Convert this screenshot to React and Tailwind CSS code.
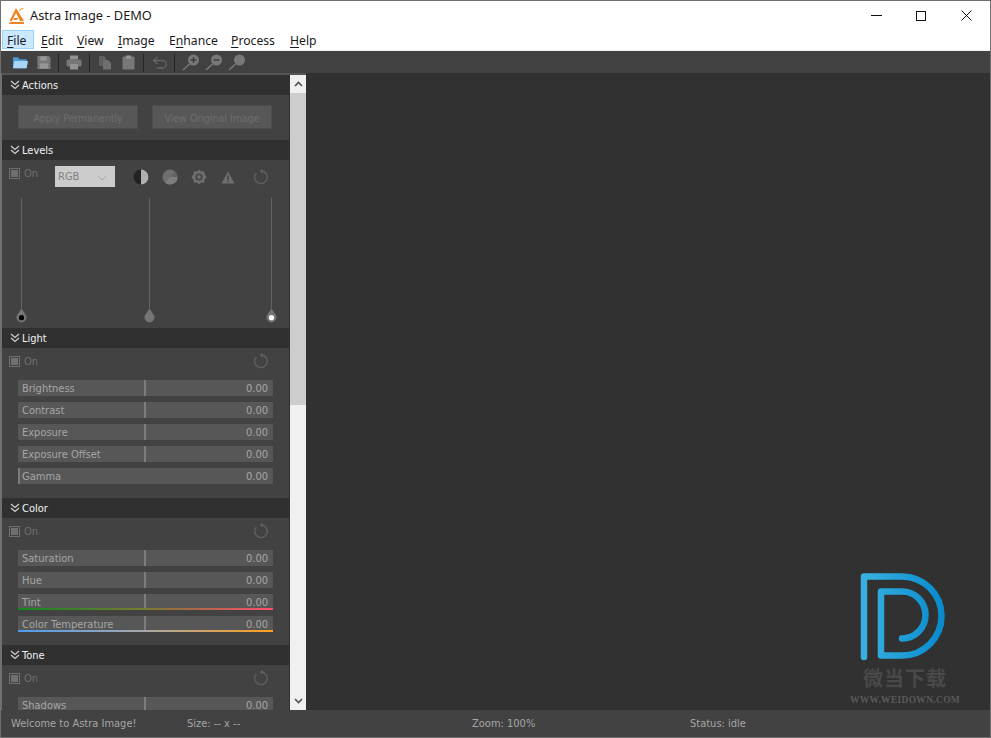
import React from 'react';

const UI_FONT = "font-['Noto_Sans','Open_Sans',sans-serif]";
const PANEL_FONT = "font-['DejaVu_Sans_Condensed','Roboto',sans-serif]";

const MENU = [
  { pre: '', key: 'F', post: 'ile', w: 'w-[32px] mr-[1px]', active: true },
  { pre: '', key: 'E', post: 'dit', w: 'w-[36px]' },
  { pre: '', key: 'V', post: 'iew', w: 'w-[41px]' },
  { pre: '', key: 'I', post: 'mage', w: 'w-[51px]' },
  { pre: 'E', key: 'n', post: 'hance', w: 'w-[62px]' },
  { pre: '', key: 'P', post: 'rocess', w: 'w-[59px]' },
  { pre: '', key: 'H', post: 'elp', w: 'w-[40px]' },
];

function AppLogo() {
  return (
    <svg width="16" height="18" viewBox="0 0 16 18" className="shrink-0">
      <path d="M7 1 L0.5 14 L3 14 L7 6 L11 14 L15 14 Z" fill="#f58220" />
      <path d="M5 11 L9 11 L8 13 L4.5 13 Z" fill="#f58220" />
      <path d="M10 3 C11 1.5 13 1 15 1.5 L13.5 2.5 C12.5 2.5 11.5 3 11 4 Z" fill="#f9a24b" />
      <rect x="0.5" y="15" width="14.5" height="2" fill="#f58220" />
    </svg>
  );
}

function TitleBar() {
  return (
    <div className="h-[29px] shrink-0 bg-white flex items-center pl-[8px]">
      <AppLogo />
      <span className={`ml-[5px] text-[12.8px] text-[#1a1a1a] ${UI_FONT}`}>Astra Image - DEMO</span>
      <div className="ml-auto flex items-center pr-[18px]">
        <svg width="11" height="11" viewBox="0 0 11 11"><path d="M0 5.500H11" stroke="#111" /></svg>
        <svg width="10" height="10" viewBox="0 0 10 10" className="ml-[34px]"><rect x="0.500" y="0.500" width="9" height="9" fill="none" stroke="#111" /></svg>
        <svg width="11" height="11" viewBox="0 0 11 11" className="ml-[35px]"><path d="M0.500 0.500L10.500 10.500M10.500 0.500L0.500 10.500" stroke="#111" /></svg>
      </div>
    </div>
  );
}

function MenuBar() {
  return (
    <div className="h-[21px] shrink-0 bg-white border-b border-[#f0f0f0] flex pl-[1px] pb-[1px]">
      {MENU.map((m) => (
        <div
          key={m.key}
          className={`${m.w} h-[19px] flex items-center pt-[3px] text-[12.2px] leading-[16px] text-[#1a1a1a] ${UI_FONT} ${m.active ? 'bg-[#cce8ff] border border-[#99d1ff] pl-[4px]' : 'pl-[6px]'}`}
        >
          <span>{m.pre}<span className="underline underline-offset-2">{m.key}</span>{m.post}</span>
        </div>
      ))}
    </div>
  );
}

function ToolSep({ ml }) {
  return <div className={`w-px h-[18px] bg-[#242424] ${ml}`} />;
}

function Toolbar() {
  const g = '#787878';
  return (
    <div className="h-[22px] shrink-0 bg-[#414141] flex items-center pl-[11px] pt-[1px]">
      <svg width="17" height="15" viewBox="0 0 18 16">
        <path d="M1 2.500 H6.500 L8 4.500 H15.500 V14 H1 Z" fill="#4f97d6" />
        <path d="M2.500 6.500 H17 L15.500 14 H1 Z" fill="#a9d6f7" />
      </svg>
      <svg width="16" height="15" viewBox="0 0 16 16" className="ml-[7px]">
        <path d="M1 1 H13 L15 3 V15 H1 Z" fill={g} />
        <rect x="4" y="1.500" width="7" height="4.500" fill="#969696" />
        <rect x="3.500" y="9" width="9" height="5.500" fill="#969696" />
      </svg>
      <ToolSep ml="ml-[6px]" />
      <svg width="16" height="15" viewBox="0 0 16 15" className="ml-[7px]">
        <rect x="4" y="0.500" width="8" height="4" fill="#939393" />
        <rect x="0.500" y="4.500" width="15" height="7" rx="1.500" fill={g} />
        <rect x="4" y="9" width="8" height="5.500" fill="#939393" />
      </svg>
      <ToolSep ml="ml-[7px]" />
      <svg width="14" height="15" viewBox="0 0 14 15" className="ml-[8px]">
        <path d="M1 1 H6 L8 3 V11 H1 Z" fill="#5f5f5f" />
        <path d="M5 5 H10 L13 8 V14.500 H5 Z" fill="#6f6f6f" />
      </svg>
      <svg width="13" height="15" viewBox="0 0 13 15" className="ml-[10px]">
        <rect x="0.500" y="1.500" width="12" height="13" rx="1" fill={g} />
        <rect x="4" y="0.500" width="5" height="3" fill="#969696" />
      </svg>
      <ToolSep ml="ml-[8px]" />
      <svg width="16" height="13" viewBox="0 0 16 13" className="ml-[8px]">
        <path d="M2 4.500 H10.500 A3.700 3.700 0 0 1 10.500 12 H5" fill="none" stroke="#666666" strokeWidth="1.300" />
        <path d="M5.500 1 L1.500 4.500 L5.500 8" fill="none" stroke="#666666" strokeWidth="1.300" />
      </svg>
      <ToolSep ml="ml-[6px]" />
      <svg width="18" height="17" viewBox="0 0 18 17" className="ml-[7px]">
        <circle cx="11.500" cy="6" r="5.500" fill={g} />
        <path d="M7.500 10 L1 16" stroke={g} strokeWidth="1.600" />
        <path d="M8.500 6H14.500M11.500 3V9" stroke="#3f3f3f" strokeWidth="1.500" />
      </svg>
      <svg width="18" height="17" viewBox="0 0 18 17" className="ml-[5px]">
        <circle cx="11.500" cy="6" r="5.500" fill={g} />
        <path d="M7.500 10 L1 16" stroke={g} strokeWidth="1.600" />
        <path d="M8.500 6H14.500" stroke="#3f3f3f" strokeWidth="1.500" />
      </svg>
      <svg width="18" height="17" viewBox="0 0 18 17" className="ml-[5px]">
        <circle cx="11.500" cy="6" r="5.500" fill={g} />
        <path d="M7.500 10 L1 16" stroke={g} strokeWidth="1.600" />
      </svg>
    </div>
  );
}

function SectionHeader({ title }) {
  return (
    <div className="h-[20px] bg-[#303030] flex items-center pl-[8px]">
      <svg width="10" height="10" viewBox="0 0 10 10">
        <path d="M1 1 L5 4.500 L9 1 M1 5 L5 8.500 L9 5" fill="none" stroke="#d0d0d0" strokeWidth="1.200" />
      </svg>
      <span className={`ml-[2px] pt-[2px] text-[11px] text-[#f0f0f0] ${PANEL_FONT}`}>{title}</span>
    </div>
  );
}

function Reset() {
  return (
    <svg width="16" height="16" viewBox="0 0 16 16">
      <path d="M8.500 2 A6.300 6.300 0 1 1 3.300 4" fill="none" stroke="#5f5f5f" strokeWidth="1.400" />
      <path d="M10 0 L10 4.500 L6.500 2 Z" fill="#5f5f5f" />
    </svg>
  );
}

function OnBox() {
  return (
    <div className="w-[30px] flex items-center">
      <div className="w-[11px] h-[11px] border border-[#6f6f6f] flex items-center justify-center">
        <div className="w-[7px] h-[7px] bg-[#6f6f6f]" />
      </div>
      <span className={`ml-[4px] pt-[1px] text-[11px] leading-[12px] text-[#6f6f6f] ${PANEL_FONT}`}>On</span>
    </div>
  );
}

function OnRow() {
  return (
    <div className="h-[26px] mb-[6px] flex items-center justify-between pl-[7px] pr-[20px]">
      <OnBox />
      <Reset />
    </div>
  );
}

function Slider({ label, tint, pos = 'middle' }) {
  return (
    <div className={`relative h-[16px] w-[255px] bg-[#575757] flex items-center justify-between pl-[4px] pr-[5px] pt-[2px] text-[11px] text-[#a6a6a6] ${PANEL_FONT}`}>
      <span>{label}</span>
      <span>0.00</span>
      <div className={`absolute top-0 bottom-0 w-[2px] bg-[#7c7c7c] ${pos === 'left' ? 'left-0' : 'left-[126px]'}`} />
      {tint === 'tint' && <div className="absolute left-0 right-0 bottom-0 h-[2px] bg-[linear-gradient(90deg,#0f8a1e,#7a7a30_50%,#ff4d6d)]" />}
      {tint === 'temp' && <div className="absolute left-0 right-0 bottom-0 h-[2px] bg-[linear-gradient(90deg,#4b9df0,#a8a8a8_50%,#ff9f1c)]" />}
    </div>
  );
}

function Sliders({ items }) {
  return (
    <div className="flex flex-col gap-[6px] pl-[16px]">
      {items.map((s) => <Slider key={s.label} {...s} />)}
    </div>
  );
}

function Handle({ dot }) {
  return (
    <div className="flex flex-col items-center w-[12px]">
      <div className="w-px h-[110px] bg-[#636363]" />
      <svg width="11" height="15" viewBox="0 0 11 15">
        <path d="M5.500 0.500 L9.500 6.500 A4.900 4.900 0 1 1 1.500 6.500 Z" fill="#757575" />
        {dot && <circle cx="5.500" cy="9.700" r="2.600" fill={dot} />}
      </svg>
    </div>
  );
}

function LevelsBody() {
  return (
    <div className="h-[168px] bg-[#424242]">
      <div className="h-[38px] flex items-start pl-[7px]">
        <div className="mt-[7px]"><OnBox /></div>
        <div className={`ml-[16px] mt-[6px] w-[60px] h-[21px] bg-[#cccccc] flex items-center justify-between pl-[3px] pr-[8px] pt-[2px] text-[11px] text-[#808080] ${PANEL_FONT}`}>
          <span>RGB</span>
          <svg width="10" height="6" viewBox="0 0 10 6"><path d="M1 1 L5 5 L9 1" fill="none" stroke="#a8a8a8" /></svg>
        </div>
        <div className="ml-[18px] mt-[9px] flex items-center">
          <svg width="16" height="16" viewBox="0 0 16 16">
            <circle cx="8" cy="8" r="7.500" fill="#222" />
            <path d="M8 0.500 A7.500 7.500 0 0 1 8 15.500 Z" fill="#b0b0b0" />
          </svg>
          <svg width="16" height="16" viewBox="0 0 16 16" className="ml-[13px]">
            <circle cx="8" cy="8" r="7.500" fill="#6e6e6e" />
            <path d="M8 8 L15.500 8 A7.500 7.500 0 0 1 3 13.600 Z" fill="#7d7d7d" />
            <path d="M8 8 L13.300 2.700 A7.500 7.500 0 0 1 15.500 8 Z" fill="#646464" />
          </svg>
          <svg width="16" height="16" viewBox="0 0 16 16" className="ml-[13px]">
            <path d="M8 0.500 L10 2.500 L13 2.200 L13.600 5.200 L15.500 8 L13.600 10.800 L13 13.800 L10 13.500 L8 15.500 L6 13.500 L3 13.800 L2.400 10.800 L0.500 8 L2.400 5.200 L3 2.200 L6 2.500 Z" fill="#6e6e6e" />
            <circle cx="8" cy="8" r="3.600" fill="#424242" />
            <circle cx="8" cy="8" r="1.900" fill="#6e6e6e" />
          </svg>
          <svg width="14" height="13" viewBox="0 0 14 13" className="ml-[14px]">
            <path d="M7 0.500 L13.500 12.500 H0.500 Z" fill="#6e6e6e" />
            <rect x="6.300" y="4.500" width="1.400" height="4.500" fill="#424242" />
            <rect x="6.300" y="9.800" width="1.400" height="1.400" fill="#424242" />
          </svg>
          <div className="ml-[18px]"><Reset /></div>
        </div>
      </div>
      <div className="flex pl-[13px]">
        <Handle dot="#000000" />
        <div className="ml-[116px]"><Handle /></div>
        <div className="ml-[110px]"><Handle dot="#ffffff" /></div>
      </div>
    </div>
  );
}

function SidePanel() {
  return (
    <div className="w-[287px] shrink-0 h-full overflow-hidden bg-[#424242]">
      <SectionHeader title="Actions" />
      <div className="h-[45px] flex items-start gap-[14px] pl-[16px] pt-[10px]">
        {['Apply Permanently', 'View Original Image'].map((t) => (
          <div key={t} className={`w-[120px] h-[24px] bg-[#575757] border border-[#4d4d4d] flex items-center justify-center pt-[3px] text-[10.500px] text-[#6d6d6d] ${PANEL_FONT}`}>{t}</div>
        ))}
      </div>
      <SectionHeader title="Levels" />
      <LevelsBody />
      <SectionHeader title="Light" />
      <OnRow />
      <Sliders items={[
        { label: 'Brightness' },
        { label: 'Contrast' },
        { label: 'Exposure' },
        { label: 'Exposure Offset' },
        { label: 'Gamma', pos: 'left' },
      ]} />
      <div className="h-[14px]" />
      <SectionHeader title="Color" />
      <OnRow />
      <Sliders items={[
        { label: 'Saturation' },
        { label: 'Hue' },
        { label: 'Tint', tint: 'tint' },
        { label: 'Color Temperature', tint: 'temp' },
      ]} />
      <div className="h-[13px]" />
      <SectionHeader title="Tone" />
      <OnRow />
      <Sliders items={[{ label: 'Shadows' }]} />
    </div>
  );
}

function ScrollBar() {
  return (
    <div className="w-[16px] shrink-0 ml-[1px] h-full bg-[#f0f0f0] flex flex-col">
      <div className="h-[18px] flex items-center justify-center">
        <svg width="9" height="6" viewBox="0 0 9 6"><path d="M1 5 L4.500 1.500 L8 5" fill="none" stroke="#505050" strokeWidth="1.600" /></svg>
      </div>
      <div className="h-[312px] bg-[#cdcdcd]" />
      <div className="flex-1" />
      <div className="h-[18px] flex items-center justify-center">
        <svg width="9" height="6" viewBox="0 0 9 6"><path d="M1 1 L4.500 4.500 L8 1" fill="none" stroke="#505050" strokeWidth="1.600" /></svg>
      </div>
    </div>
  );
}

function Watermark() {
  return (
    <div className="absolute right-[30px] bottom-[4px] w-[110px] flex flex-col items-center">
      <svg width="90" height="92" viewBox="0 0 90 92">
        <defs>
          <linearGradient id="wd" x1="0" y1="0" x2="1" y2="0">
            <stop offset="0" stopColor="#38b1e2" />
            <stop offset="1" stopColor="#0a8bcd" />
          </linearGradient>
        </defs>
        <path
          d="M4 85 V4.500 H42 A39.500 39.500 0 0 1 42 83.500 H21 V19.500 H42 A23.500 23.500 0 0 1 42 66.500"
          fill="none"
          stroke="url(#wd)"
          strokeWidth="6.500"
          strokeLinecap="round"
          strokeLinejoin="round"
        />
      </svg>
      <div className="mt-[2px] text-[20px] leading-[24px] font-bold tracking-[1px] text-[#494949] font-['Noto_Sans_CJK_SC',sans-serif]">微当下载</div>
      <div className="mt-[4px] text-[9.500px] leading-[12px] font-bold tracking-[0.3px] whitespace-nowrap text-[#595959] font-['Liberation_Serif',serif]">WWW.WEIDOWN.COM</div>
    </div>
  );
}

function StatusBar() {
  return (
    <div className={`h-[27px] shrink-0 bg-[#424242] flex items-center pl-[10px] pt-[1px] text-[11px] text-[#a6a6a6] ${PANEL_FONT}`}>
      <span className="w-[176px]">Welcome to Astra Image!</span>
      <span className="w-[285px]">Size: -- x --</span>
      <span className="w-[218px]">Zoom: 100%</span>
      <span>Status: idle</span>
    </div>
  );
}

export default function App() {
  return (
    <div className="w-[991px] h-[738px] border border-[#707070] flex flex-col overflow-hidden bg-[#313131]">
      <TitleBar />
      <MenuBar />
      <Toolbar />
      <div className="flex-1 min-h-0 flex relative bg-[#313131]">
        <div className="w-[305px] shrink-0 h-full flex border-t-2 border-[#555555] border-l border-l-[#707070]">
          <SidePanel />
          <ScrollBar />
        </div>
        <div className="flex-1 relative">
          <Watermark />
        </div>
      </div>
      <StatusBar />
    </div>
  );
}
